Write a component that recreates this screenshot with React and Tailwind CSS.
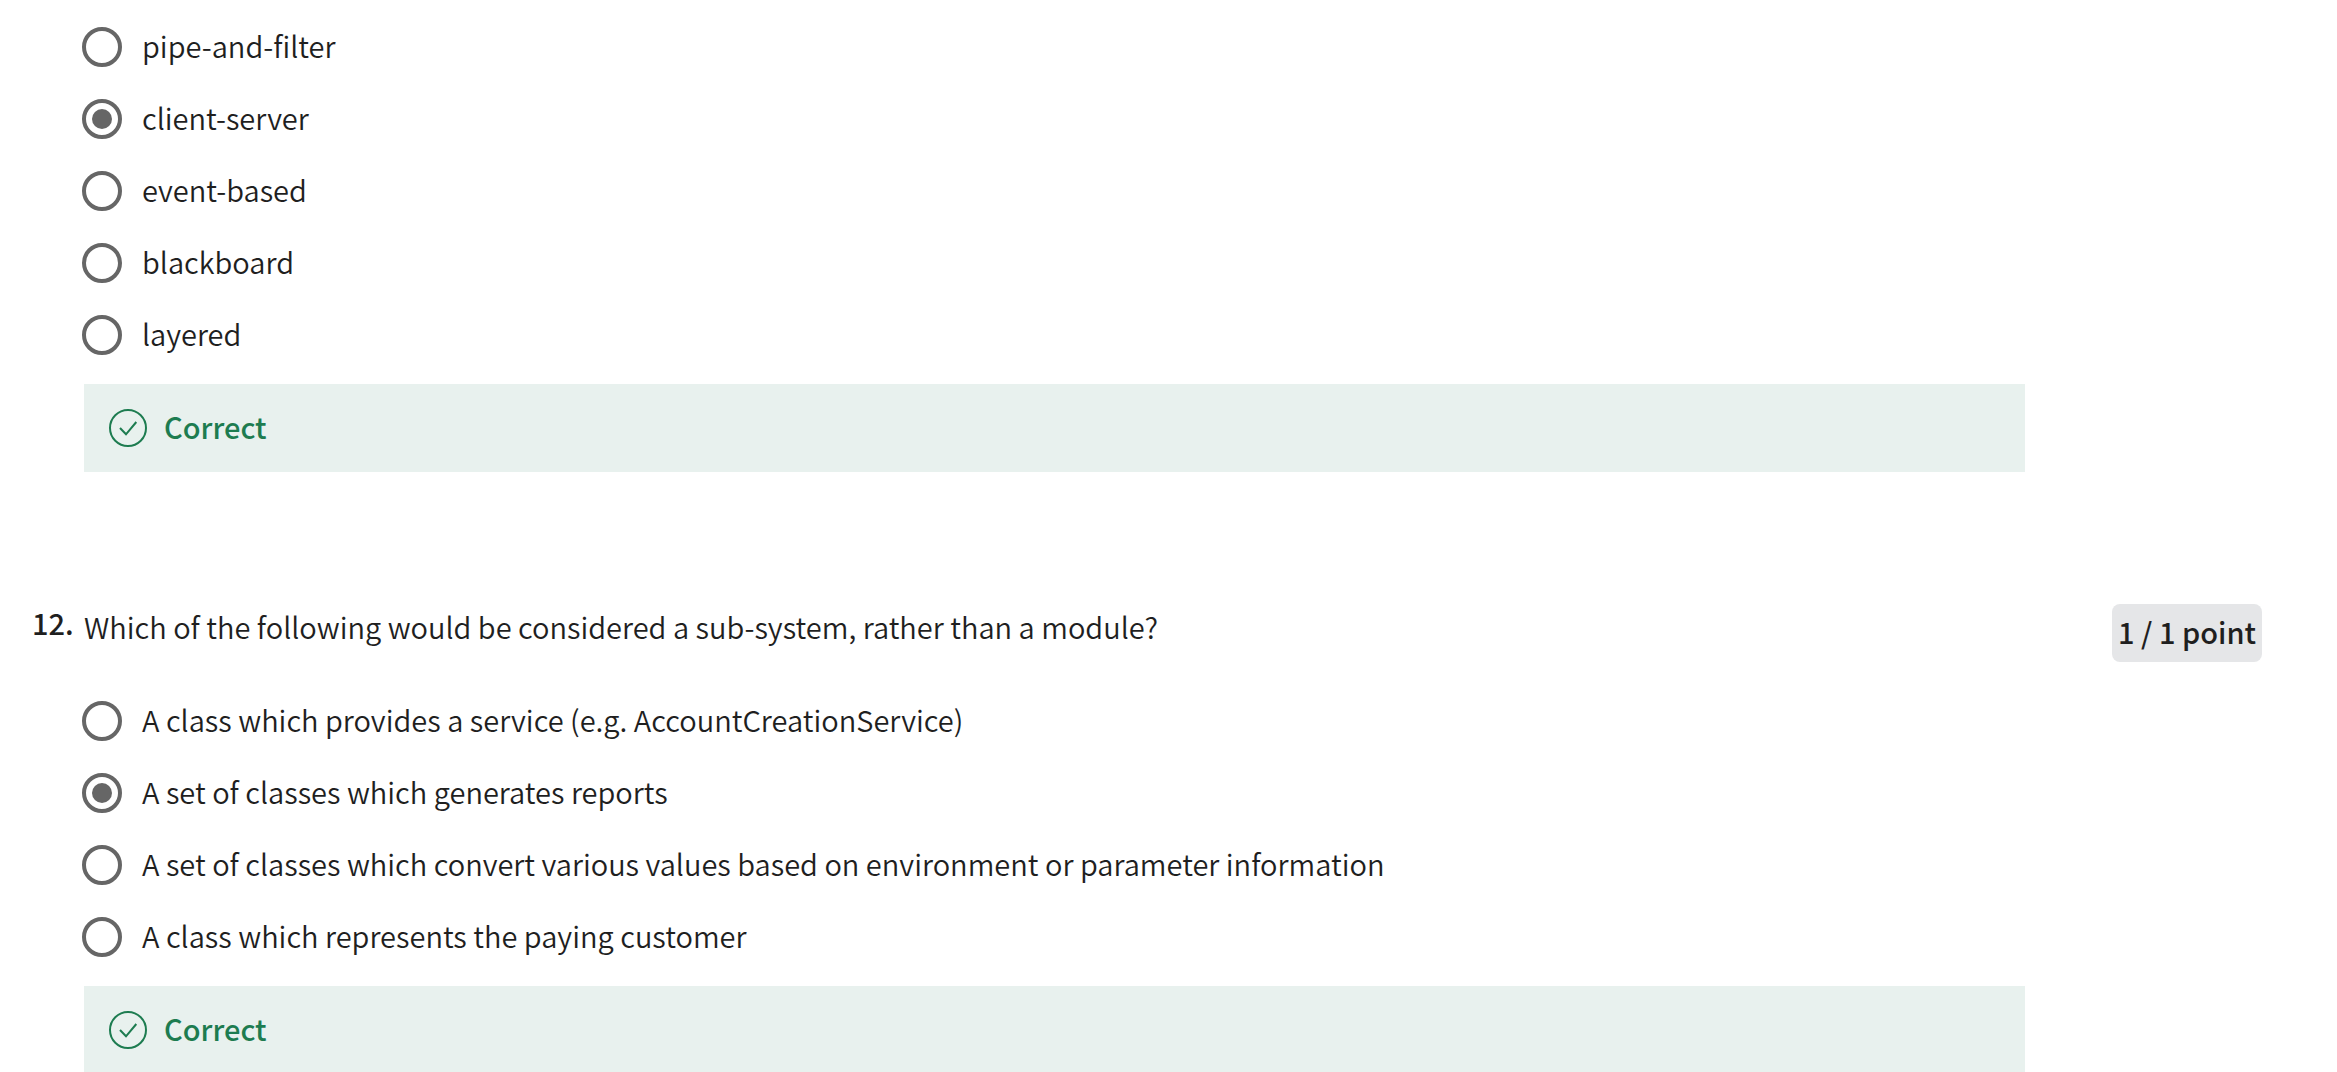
function Option({ name, label, checked }) {
  return (
    <label className="flex h-12 items-center gap-5">
      <input
        type="radio"
        name={name}
        defaultChecked={checked}
        className="grid size-10 shrink-0 appearance-none place-content-center rounded-full border-4 border-[#666666] bg-white before:size-5 before:rounded-full checked:before:bg-[#666666]"
      />
      <span className="pb-[3px]">{label}</span>
    </label>
  );
}

function Options({ name, items, selected }) {
  return (
    <div className="-ml-0.5 flex flex-col gap-6">
      {items.map((item) => (
        <Option key={item} name={name} label={item} checked={item === selected} />
      ))}
    </div>
  );
}

function Correct() {
  return (
    <div className="mt-[25px] flex items-center gap-4 bg-[#e8f1ee] px-6 py-5 text-[#1d7c50]">
      <svg viewBox="0 0 40 40" className="size-10 shrink-0" fill="none" stroke="currentColor" strokeWidth="2" aria-hidden="true">
        <circle cx="20" cy="20" r="18" />
        <path d="M12 20l6 6.3L28.3 14" />
      </svg>
      <p className="pb-[3px] font-medium">Correct</p>
    </div>
  );
}

export default function App() {
  return (
    <main className="h-screen overflow-hidden bg-white pt-[23px] pr-[75px] pl-8 font-['Noto_Sans_CJK_SC','Noto_Sans',sans-serif] text-[29px] leading-[45px] font-[350] text-[#1f1f1f]">
      <section className="mr-[237px] ml-[52px]">
        <Options
          name="q11"
          selected="client-server"
          items={["pipe-and-filter", "client-server", "event-based", "blackboard", "layered"]}
        />
        <Correct />
      </section>
      <section className="mt-[132px]">
        <header className="flex items-start">
          <span className="w-[52px] shrink-0 leading-9 font-medium">12.</span>
          <h2 className="flex-1">Which of the following would be considered a sub-system, rather than a module?</h2>
          <span className="rounded-lg bg-[#e5e6e8] px-1.5 pt-[5px] pb-2 font-medium">1 / 1 point</span>
        </header>
        <div className="mt-[35px] mr-[237px] ml-[52px]">
          <Options
            name="q12"
            selected="A set of classes which generates reports"
            items={[
              "A class which provides a service (e.g. AccountCreationService)",
              "A set of classes which generates reports",
              "A set of classes which convert various values based on environment or parameter information",
              "A class which represents the paying customer",
            ]}
          />
          <Correct />
        </div>
      </section>
    </main>
  );
}
